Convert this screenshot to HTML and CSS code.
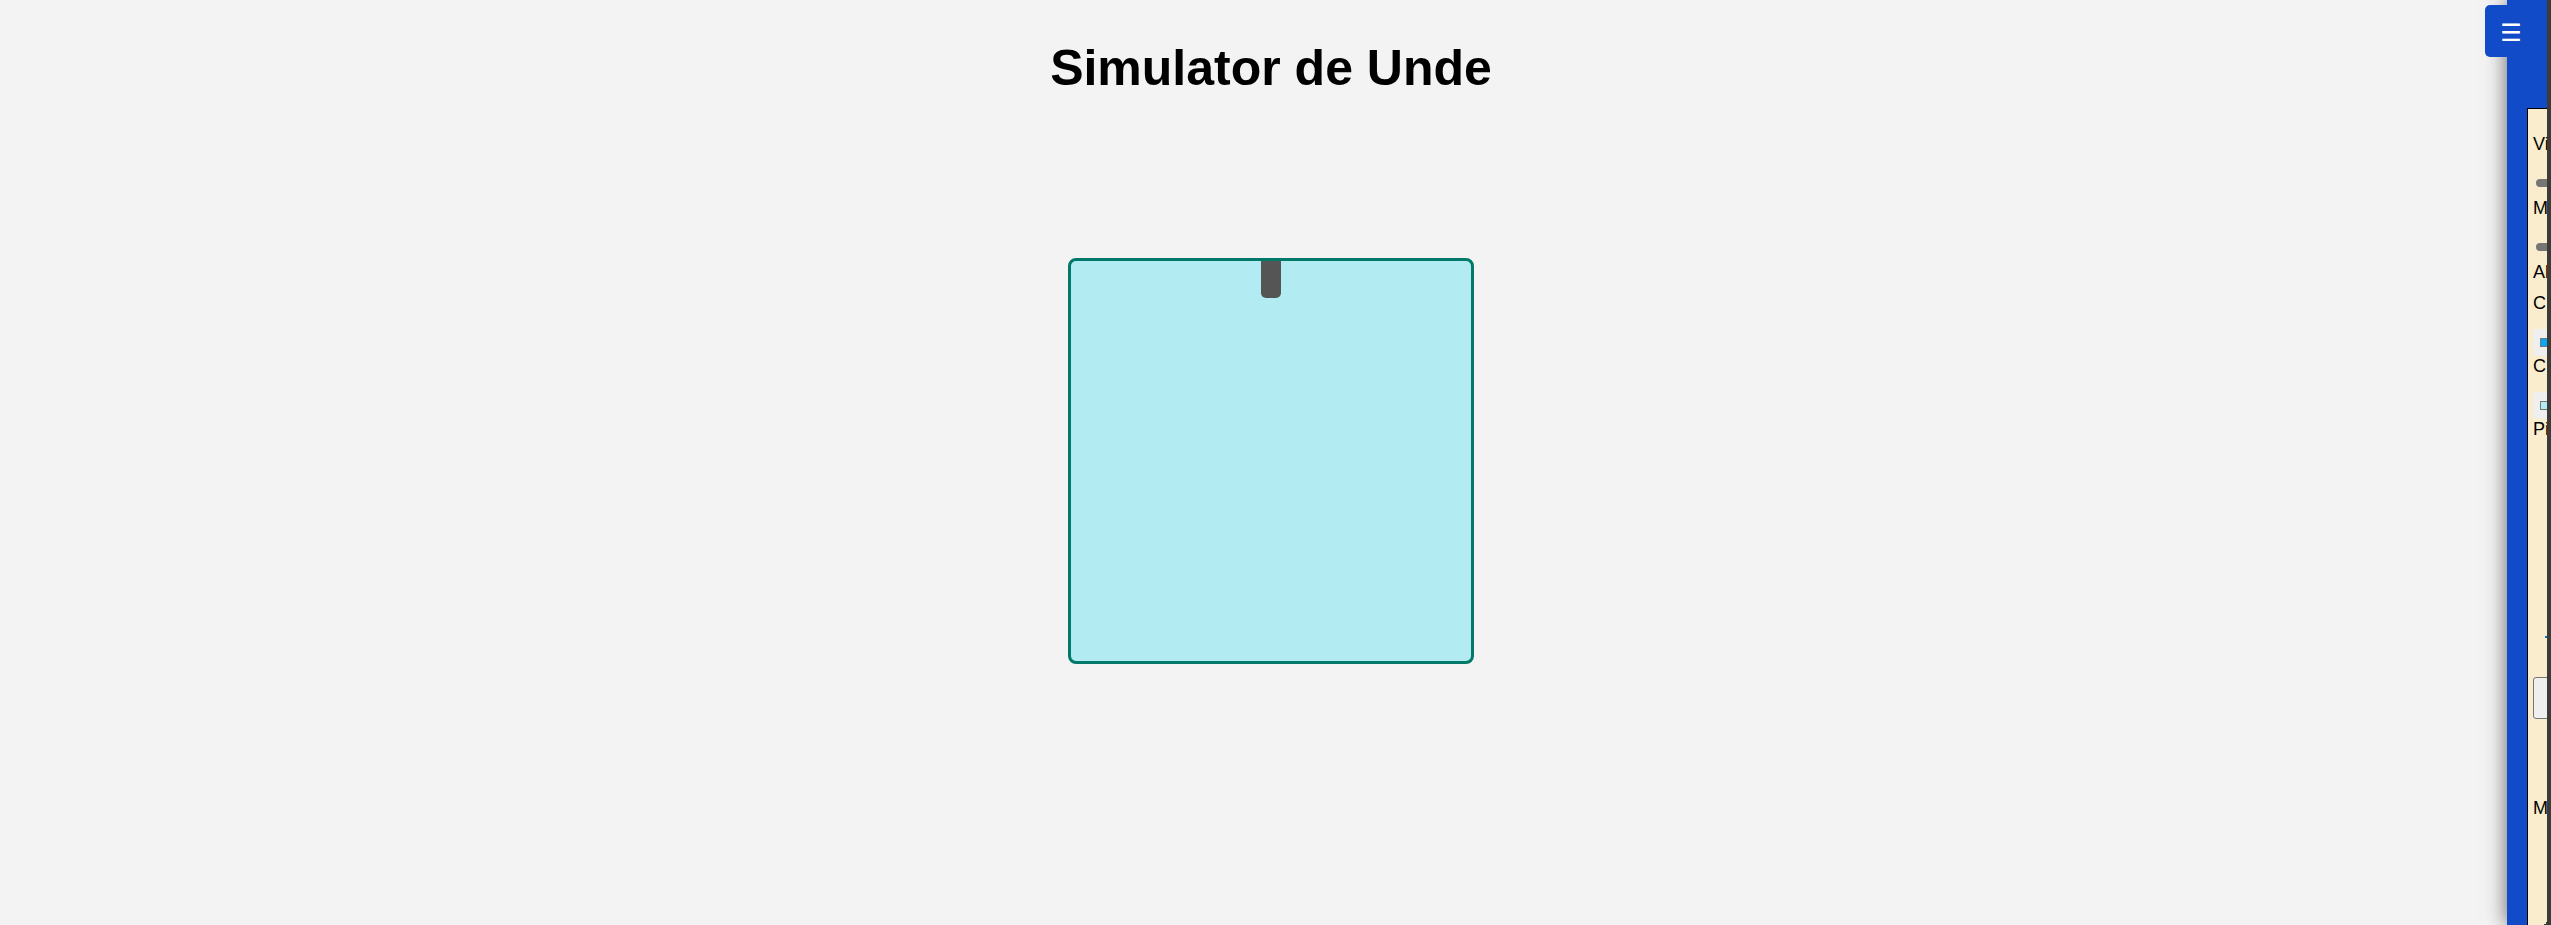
FILE: index.html
```html
<!DOCTYPE html>
<html lang="ro">
<head>
<meta charset="utf-8">
<title>Simulator de Unde</title>
<link rel="stylesheet" href="styles.css">
</head>
<body>
<main class="stage">
  <h1 class="title">Simulator de Unde</h1>
  <div class="tank"><div class="source"></div></div>
</main>
<aside class="sidebar">
  <button class="toggle" type="button" aria-label="Meniu">☰</button>
  <form class="panel">
    <label class="text" for="speed">Vi</label>
    <input class="range" id="speed" type="range">
    <label class="text" for="size">M</label>
    <input class="range" id="size" type="range">
    <span class="text">Al</span>
    <label class="text second" for="wave">C</label>
    <input class="color" id="wave" type="color" value="#03a9f4">
    <label class="text" for="water">C</label>
    <input class="color" id="water" type="color" value="#b2ebf2">
    <span class="text">Pi</span>
    <div class="preview"><i class="mark"></i></div>
    <button class="action" type="button" aria-label="Start"></button>
    <span class="text mode">M</span>
  </form>
</aside>
<div class="edge"></div>
</body>
</html>
```
FILE: styles.css
```css
* { box-sizing: border-box; }
body {
  margin: 0;
  min-height: 100vh;
  background: #f3f3f3;
  font-family: "Liberation Sans", Arial, sans-serif;
  overflow: hidden;
}
.stage {
  display: flex;
  flex-direction: column;
  align-items: center;
  padding: 39px 9px 0 0;
}
.title { margin: 0 0 161px; font-size: 50px; line-height: 58px; }
.tank {
  display: flex;
  justify-content: center;
  width: 406px;
  height: 406px;
  background: #b2ebf2;
  border: 3px solid #00796b;
  border-radius: 8px;
}
.source { width: 20px; height: 37px; background: #555; border-radius: 0 0 5px 5px; }
.sidebar {
  position: fixed;
  top: 0;
  bottom: 0;
  right: -356px;
  width: 400px;
  padding: 108px 20px 0;
  background: #124bc8;
  box-shadow: 0 0 20px rgba(0, 0, 0, .6);
}
.toggle {
  position: absolute;
  top: 5px;
  left: -22px;
  width: 52px;
  height: 52px;
  padding: 4px 0 0;
  border: 0;
  border-radius: 5px;
  background: #124bc8;
  color: #fff;
  font: 24px "DejaVu Sans", sans-serif;
}
.panel {
  display: flex;
  flex-direction: column;
  align-items: flex-start;
  height: 840px;
  padding: 25px 5px;
  background: #faedcd;
  border: 1px solid #000;
  font-size: 18px;
}
.text { line-height: 21px; white-space: nowrap; }
.second { margin-top: 10px; }
.range {
  appearance: none;
  width: 300px;
  height: 8px;
  margin: 24px 3px 11px;
  background: #757575;
  border-radius: 4px;
}
.range::-webkit-slider-thumb { appearance: none; width: 16px; height: 16px; border-radius: 8px; background: #0075ff; }
.color { width: 50px; height: 27px; margin: 15px 0 0; border: 0; border-radius: 3px; background: #efefef; padding: 9px 5px; }
.color::-webkit-color-swatch-wrapper { padding: 0 2px; }
.color::-webkit-color-swatch { border: 1px solid #777; }
.preview { height: 237px; padding: 196px 12px 0; }
.mark { display: block; width: 40px; height: 2px; background: #0075c8; }
.action { width: 200px; height: 42px; border: 1px solid #767676; border-radius: 3px; background: #efefef; }
.mode { margin-top: 79px; }
.edge { position: fixed; top: 0; right: 0; bottom: 0; width: 4px; background: #3d3b38; }
.edge::after {
  content: "";
  position: absolute;
  right: 4px;
  bottom: 0;
  width: 5px;
  height: 5px;
  background: radial-gradient(circle at 0 0, transparent 5px, #3d3b38 5px);
}
```
